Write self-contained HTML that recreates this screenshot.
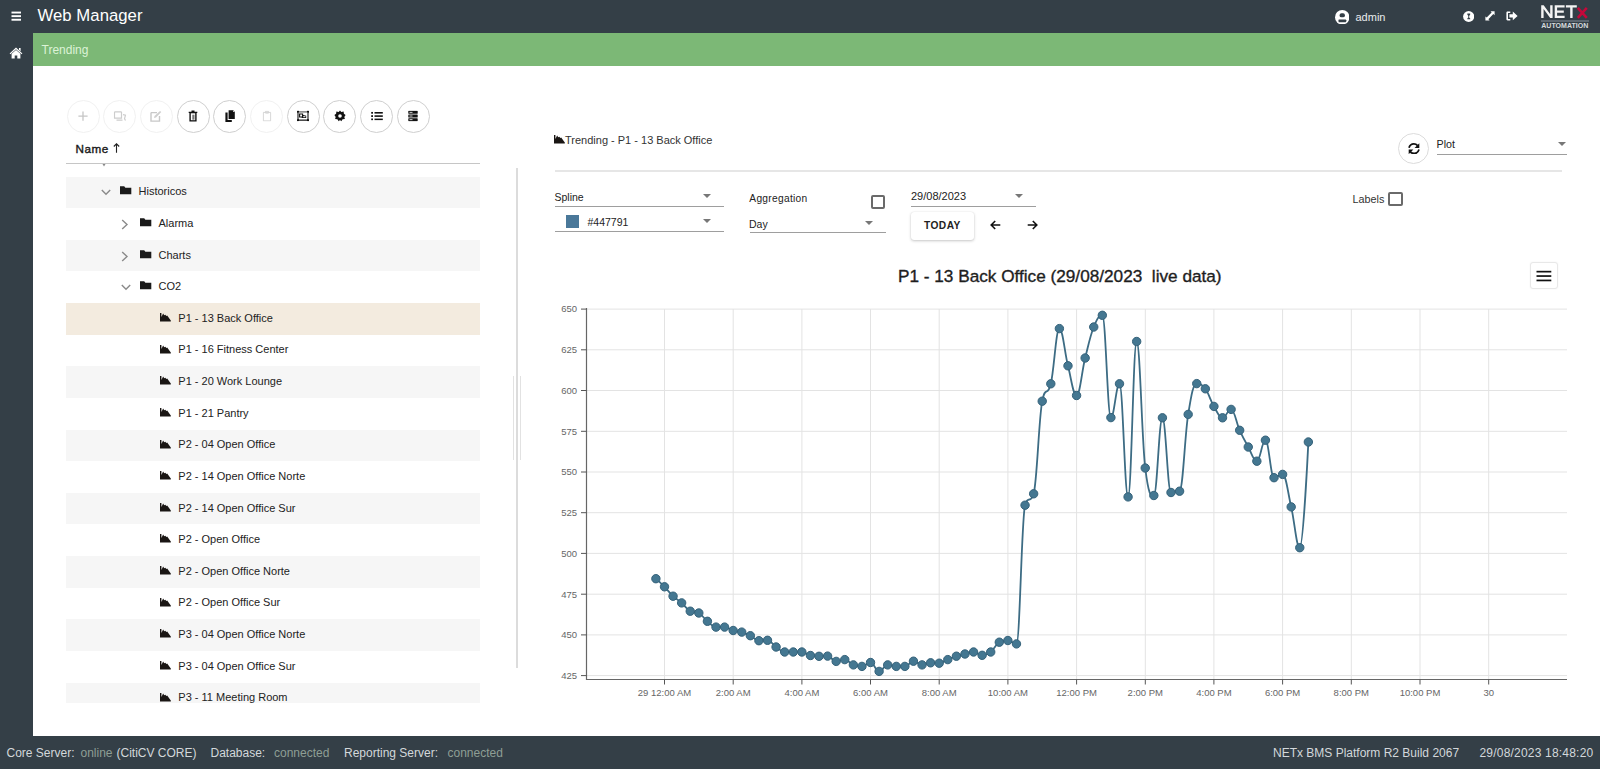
<!DOCTYPE html>
<html><head><meta charset="utf-8">
<style>
*{box-sizing:border-box;margin:0;padding:0}
html,body{width:1600px;height:769px;overflow:hidden;background:#343f47;font-family:"Liberation Sans",sans-serif;position:relative}
.abs{position:absolute;display:block;line-height:1}
.abs>svg{display:block}
#green{position:absolute;left:33px;top:33px;width:1567px;height:33.3px;background:#7cb876}
#green .t{position:absolute;left:8.5px;top:10px;font-size:12px;color:#dcf3d6}
#content{position:absolute;left:33px;top:66.3px;width:1567px;height:669.6px;background:#fff}
.chart{position:absolute;left:0;top:0;font-family:"Liberation Sans",sans-serif}
#footer{position:absolute;left:0;top:735.9px;width:1600px;height:34px}
#footer span{position:absolute;top:10.3px;font-size:12px;color:#d3d8db;white-space:pre}
#footer .g{color:#8e9e95}
.tb{position:absolute;top:100px;width:33px;height:33px;border-radius:50%;border:1.3px solid #cfcfcf;background:#fff}
.tb.dis{border-color:#f1f1f1}
.tb svg{position:absolute;left:50%;top:50%;transform:translate(-50%,calc(-50% - 0.9px))}
#tree{position:absolute;left:66px;top:164px;width:414px;height:538.5px;overflow:hidden}
.row{position:absolute;left:0;width:414px;height:31.625px}
.row.odd{background:#f6f6f6}
.row.sel{background:#f3ebdf}
.txt{font-size:11px;color:#222;white-space:pre}
.sel-line{position:absolute;background:#9e9e9e;height:1px}
.arrow{position:absolute;width:0;height:0;border-left:4.5px solid transparent;border-right:4.5px solid transparent;border-top:4px solid #777}
.lbl{position:absolute;font-size:10.5px;color:#222;white-space:pre;line-height:1}
.cb{position:absolute;border:2px solid #6a6a6a;border-radius:2px;background:#fff}
</style></head>
<body>
<!-- header -->
<svg class="abs" style="left:11px;top:11px" width="11" height="10" viewBox="0 0 11 10"><rect x="0.5" y="0.6" width="9.5" height="1.9" fill="#fff"/><rect x="0.5" y="4.2" width="9.5" height="1.9" fill="#fff"/><rect x="0.5" y="7.8" width="9.5" height="1.9" fill="#fff"/></svg>
<span class="abs" style="left:37.5px;top:8px;font-size:16.7px;color:#fff;letter-spacing:0.05px">Web Manager</span>
<!-- home -->
<svg class="abs" style="left:8.8px;top:47px" width="14" height="12" viewBox="0 0 14 12"><path d="M7 0.6 L13.4 6.4 L12.6 7.3 L7 2.3 L1.4 7.3 L0.6 6.4 Z" fill="#fff"/><path d="M10 1 H11.6 V4.2 L10 2.8Z" fill="#fff"/><path d="M2.6 6.8 L7 3 L11.4 6.8 V11.6 H8.3 V8.4 H5.7 V11.6 H2.6 Z" fill="#fff"/></svg>
<!-- user -->
<svg class="abs" style="left:1334.6px;top:9.8px" width="14.5" height="14.5" viewBox="0 0 14 14"><circle cx="7" cy="7" r="7" fill="#fff"/><rect x="4.4" y="3.2" width="5.2" height="3.9" rx="1.9" fill="#343f47"/><path d="M3.6 9.1 H10.3 L11.3 10.4 L10.3 11.8 H3.6 Q2.9 10.4 3.6 9.1Z" fill="#343f47"/></svg>
<span class="abs" style="left:1355.5px;top:12px;font-size:11px;color:#e8ecee">admin</span>
<!-- info -->
<svg class="abs" style="left:1462.8px;top:10.5px" width="11.4" height="11" viewBox="0 0 11.4 11"><ellipse cx="5.7" cy="5.5" rx="5.6" ry="5.4" fill="#fff"/><path d="M4.3 2.6 H7.2 V3.5 L6.2 5 V6.4 L7.2 7.4 V8.2 H4.3 V7.4 L5.3 6.4 V5 L4.3 3.5Z" fill="#343f47"/></svg>
<!-- expand -->
<svg class="abs" style="left:1484.6px;top:10.7px" width="10" height="11" viewBox="0 0 10 11"><path d="M5.6 0.3 H9.6 V4.3 L8.3 3.1 L3.4 8.2 L4.6 9.4 H0.4 V5.4 L1.7 6.6 L6.6 1.6Z" fill="#fff"/></svg>
<!-- signout -->
<svg class="abs" style="left:1505.6px;top:11px" width="12" height="10" viewBox="0 0 12 10"><path d="M4.3 0.4 H1.6 C0.9 0.4 0.4 0.9 0.4 1.6 V8.2 C0.4 8.9 0.9 9.4 1.6 9.4 H4.3 V7.9 H2 V1.9 H4.3Z" fill="#fff"/><path d="M6.8 0.6 L11.6 4.9 L6.8 9.2 V6.6 H3.4 V3.2 H6.8Z" fill="#fff"/></svg>
<!-- NETx logo -->
<svg class="abs" style="left:1535px;top:0px" width="60" height="33" viewBox="0 0 60 33"><path d="M6.2 18 V5.2 H8.7 L15.2 14.2 V5.2 H17.6 V18 H15.2 L8.6 9 V18Z" fill="#f4f4f4"/><path d="M19.7 5.2 H29.6 V7.5 H22.1 V10.5 H28.8 V12.8 H22.1 V15.7 H29.6 V18 H19.7Z" fill="#f4f4f4"/><path d="M30.9 5.2 H41.8 V7.5 H37.6 V18 H35.2 V7.5 H30.9Z" fill="#f4f4f4"/><path d="M42.8 7.8 L51.8 17.8 M51.8 7.8 L42.8 17.8" stroke="#c5083a" stroke-width="2.6"/><rect x="6" y="20.2" width="48" height="1.6" fill="#66707a"/><text x="6.3" y="28.4" font-size="6.4" font-weight="bold" fill="#d6dadd" font-family="Liberation Sans" textLength="47" lengthAdjust="spacingAndGlyphs">AUTOMATION</text></svg>

<div id="green"><span class="t">Trending</span></div>
<div id="content"></div>

<!-- toolbar -->
<div class="tb dis" style="left:66.5px"><svg width="10" height="10" viewBox="0 0 10 10"><path d="M4.35 0.4 H5.65 V4.35 H9.6 V5.65 H5.65 V9.6 H4.35 V5.65 H0.4 V4.35 H4.35Z" fill="#c6c6c6"/></svg></div>
<div class="tb dis" style="left:103.2px"><svg width="13" height="11" viewBox="0 0 13 11"><path d="M1 1.2 H8 M1 1.2 V7.5 H8 V1.2 M3 9.5 H9 M9.5 4 L12 4.5 L11 8 L12 10" fill="none" stroke="#cdcdcd" stroke-width="1.2"/></svg></div>
<div class="tb dis" style="left:139.9px"><svg width="12" height="12" viewBox="0 0 12 12"><path d="M1 2.5 H7 M1 2.5 V11 H9.5 V6" fill="none" stroke="#c8c8c8" stroke-width="1.4"/><path d="M4 8 L4.5 6 L10 0.8 L11.3 2 L6 7.4 Z" fill="#cfcfcf"/></svg></div>
<div class="tb" style="left:176.6px"><svg width="10" height="12" viewBox="0 0 10 12"><path d="M3.5 0.5 H6.5 V1.6 H9.3 V3 H8.6 V11.5 H1.4 V3 H0.7 V1.6 H3.5Z" fill="#111"/><rect x="2.8" y="3.2" width="4.4" height="6.9" fill="#fff"/><rect x="4.3" y="4.6" width="2.2" height="5" fill="#777"/></svg></div>
<div class="tb" style="left:213.3px"><svg width="10" height="12" viewBox="0 0 10 12"><path d="M3.6 0.2 H8.2 L9.8 1.8 V9 H3.6Z" fill="#111"/><path d="M0.4 2.4 H2.6 V10 H6.8 V11.8 H0.4Z" fill="#111"/><path d="M8 0.6 L9.4 2 H8Z" fill="#fff"/></svg></div>
<div class="tb dis" style="left:250px"><svg width="9" height="11" viewBox="0 0 9 11"><path d="M0.8 1.8 H8.2 V10.3 H0.8Z M3 0.7 H6 V2.5 H3Z" fill="none" stroke="#d4d4d4" stroke-width="1"/></svg></div>
<div class="tb" style="left:286.7px"><svg width="12" height="11" viewBox="0 0 12 11"><path d="M1 1 V10 M11 1 V10" stroke="#111" stroke-width="1.1"/><rect x="1" y="0.6" width="10" height="1.4" fill="#777"/><rect x="1" y="8.9" width="10" height="1.3" fill="#222"/><circle cx="1" cy="1" r="1.1" fill="#111"/><circle cx="11" cy="1" r="1.1" fill="#111"/><circle cx="1" cy="9.6" r="1.1" fill="#111"/><circle cx="11" cy="9.6" r="1.1" fill="#111"/><path d="M2.6 3.4 H5.6 V6.4 H2.6Z" fill="none" stroke="#111" stroke-width="1.1"/><path d="M5.4 4.2 L9.2 5.2 V7.4 H4.6Z" fill="#111"/><rect x="6.2" y="5.6" width="2.2" height="1" fill="#fff"/></svg></div>
<div class="tb" style="left:323.4px"><svg width="12" height="12" viewBox="0 0 12 12"><path d="M6 0.4 L7.3 1.9 L9.6 1.4 L9.9 3.6 L11.6 5 L10.3 6.8 L10.9 9 L8.6 9.2 L7.3 11.2 L6 10 L4.7 11.2 L3.4 9.2 L1.1 9 L1.7 6.8 L0.4 5 L2.1 3.6 L2.4 1.4 L4.7 1.9Z" fill="#111"/><circle cx="6" cy="5.9" r="1.8" fill="#fff"/></svg></div>
<div class="tb" style="left:360.1px"><svg width="12" height="9" viewBox="0 0 12 9"><rect x="0.2" y="0.3" width="1.8" height="1.8" fill="#111"/><rect x="0.2" y="3.6" width="1.8" height="1.8" fill="#111"/><rect x="0.2" y="6.9" width="1.8" height="1.8" fill="#111"/><rect x="3.5" y="0.4" width="8.3" height="1.6" fill="#111"/><rect x="3.5" y="3.7" width="8.3" height="1.6" fill="#111"/><rect x="3.5" y="7" width="8.3" height="1.6" fill="#111"/></svg></div>
<div class="tb" style="left:396.8px"><svg width="10" height="11" viewBox="0 0 10 11"><rect x="0.3" y="0.2" width="9.4" height="3" rx="0.6" fill="#111"/><rect x="0.3" y="3.9" width="9.4" height="3" rx="0.6" fill="#111"/><rect x="0.3" y="7.6" width="9.4" height="3" rx="0.6" fill="#111"/><rect x="1.5" y="1.3" width="3" height="0.8" fill="#fff"/><rect x="1.5" y="5" width="3" height="0.8" fill="#fff"/><rect x="1.5" y="8.7" width="3" height="0.8" fill="#fff"/></svg></div>

<!-- Name header -->
<span class="abs" style="left:75.5px;top:143px;font-size:11.7px;letter-spacing:0.55px;color:#1a1a1a;-webkit-text-stroke:0.4px #1a1a1a">Name</span>
<svg class="abs" style="left:112.5px;top:143px" width="7" height="10" viewBox="0 0 7 10"><path d="M3.5 0.8 V9.8 M0.8 3.5 L3.5 0.8 L6.2 3.5" fill="none" stroke="#222" stroke-width="1.1"/></svg>
<div class="abs" style="left:66px;top:162.8px;width:414px;height:1.3px;background:#c6c6c6"></div>
<svg class="abs" style="left:101.5px;top:163.8px" width="4" height="3" viewBox="0 0 4 3"><path d="M0.5 0 L2 2.4 L3.5 0Z" fill="#888"/></svg>

<div id="tree">
<div class="row odd" style="top:12.500px"><span class="abs" style="left:34.8px;top:12.8px"><svg class="chev" width="10" height="7" viewBox="0 0 10 7"><path d="M0.8 1 L5 5.3 L9.2 1" fill="none" stroke="#8a8a8a" stroke-width="1.4"/></svg></span><span class="abs" style="left:54.0px;top:9.8px"><svg class="ic" width="12" height="9" viewBox="0 0 12 9"><path d="M0 0.3 H4.2 L5.4 1.8 H11.3 V8.2 H0 Z" fill="#1a1a1a"/></svg></span><span class="abs txt" style="left:72.5px;top:9.8px">Historicos</span></div>
<div class="row" style="top:44.125px"><span class="abs" style="left:55.0px;top:11px"><svg class="chev" width="8" height="11" viewBox="0 0 8 11"><path d="M1.2 1 L6 5.5 L1.2 10" fill="none" stroke="#8a8a8a" stroke-width="1.4"/></svg></span><span class="abs" style="left:74.0px;top:9.8px"><svg class="ic" width="12" height="9" viewBox="0 0 12 9"><path d="M0 0.3 H4.2 L5.4 1.8 H11.3 V8.2 H0 Z" fill="#1a1a1a"/></svg></span><span class="abs txt" style="left:92.5px;top:9.8px">Alarma</span></div>
<div class="row odd" style="top:75.750px"><span class="abs" style="left:55.0px;top:11px"><svg class="chev" width="8" height="11" viewBox="0 0 8 11"><path d="M1.2 1 L6 5.5 L1.2 10" fill="none" stroke="#8a8a8a" stroke-width="1.4"/></svg></span><span class="abs" style="left:74.0px;top:9.8px"><svg class="ic" width="12" height="9" viewBox="0 0 12 9"><path d="M0 0.3 H4.2 L5.4 1.8 H11.3 V8.2 H0 Z" fill="#1a1a1a"/></svg></span><span class="abs txt" style="left:92.5px;top:9.8px">Charts</span></div>
<div class="row" style="top:107.375px"><span class="abs" style="left:54.8px;top:12.8px"><svg class="chev" width="10" height="7" viewBox="0 0 10 7"><path d="M0.8 1 L5 5.3 L9.2 1" fill="none" stroke="#8a8a8a" stroke-width="1.4"/></svg></span><span class="abs" style="left:74.0px;top:9.8px"><svg class="ic" width="12" height="9" viewBox="0 0 12 9"><path d="M0 0.3 H4.2 L5.4 1.8 H11.3 V8.2 H0 Z" fill="#1a1a1a"/></svg></span><span class="abs txt" style="left:92.5px;top:9.8px">CO2</span></div>
<div class="row sel" style="top:139.000px"><span class="abs" style="left:94.0px;top:10.1px"><svg class="ic" width="12" height="9" viewBox="0 0 12 9"><path d="M0 0 H1.4 V7.3 H10.8 V8.6 H0Z M1.4 7.4 V4 L3.1 0.6 L4.3 2.3 L5.4 1.7 L6.3 2.9 L7.2 2.4 L10.8 7.4Z" fill="#1a1614"/></svg></span><span class="abs txt" style="left:112.3px;top:9.8px">P1 - 13 Back Office</span></div>
<div class="row" style="top:170.625px"><span class="abs" style="left:94.0px;top:10.1px"><svg class="ic" width="12" height="9" viewBox="0 0 12 9"><path d="M0 0 H1.4 V7.3 H10.8 V8.6 H0Z M1.4 7.4 V4 L3.1 0.6 L4.3 2.3 L5.4 1.7 L6.3 2.9 L7.2 2.4 L10.8 7.4Z" fill="#1a1614"/></svg></span><span class="abs txt" style="left:112.3px;top:9.8px">P1 - 16 Fitness Center</span></div>
<div class="row odd" style="top:202.250px"><span class="abs" style="left:94.0px;top:10.1px"><svg class="ic" width="12" height="9" viewBox="0 0 12 9"><path d="M0 0 H1.4 V7.3 H10.8 V8.6 H0Z M1.4 7.4 V4 L3.1 0.6 L4.3 2.3 L5.4 1.7 L6.3 2.9 L7.2 2.4 L10.8 7.4Z" fill="#1a1614"/></svg></span><span class="abs txt" style="left:112.3px;top:9.8px">P1 - 20 Work Lounge</span></div>
<div class="row" style="top:233.875px"><span class="abs" style="left:94.0px;top:10.1px"><svg class="ic" width="12" height="9" viewBox="0 0 12 9"><path d="M0 0 H1.4 V7.3 H10.8 V8.6 H0Z M1.4 7.4 V4 L3.1 0.6 L4.3 2.3 L5.4 1.7 L6.3 2.9 L7.2 2.4 L10.8 7.4Z" fill="#1a1614"/></svg></span><span class="abs txt" style="left:112.3px;top:9.8px">P1 - 21 Pantry</span></div>
<div class="row odd" style="top:265.500px"><span class="abs" style="left:94.0px;top:10.1px"><svg class="ic" width="12" height="9" viewBox="0 0 12 9"><path d="M0 0 H1.4 V7.3 H10.8 V8.6 H0Z M1.4 7.4 V4 L3.1 0.6 L4.3 2.3 L5.4 1.7 L6.3 2.9 L7.2 2.4 L10.8 7.4Z" fill="#1a1614"/></svg></span><span class="abs txt" style="left:112.3px;top:9.8px">P2 - 04 Open Office</span></div>
<div class="row" style="top:297.125px"><span class="abs" style="left:94.0px;top:10.1px"><svg class="ic" width="12" height="9" viewBox="0 0 12 9"><path d="M0 0 H1.4 V7.3 H10.8 V8.6 H0Z M1.4 7.4 V4 L3.1 0.6 L4.3 2.3 L5.4 1.7 L6.3 2.9 L7.2 2.4 L10.8 7.4Z" fill="#1a1614"/></svg></span><span class="abs txt" style="left:112.3px;top:9.8px">P2 - 14 Open Office Norte</span></div>
<div class="row odd" style="top:328.750px"><span class="abs" style="left:94.0px;top:10.1px"><svg class="ic" width="12" height="9" viewBox="0 0 12 9"><path d="M0 0 H1.4 V7.3 H10.8 V8.6 H0Z M1.4 7.4 V4 L3.1 0.6 L4.3 2.3 L5.4 1.7 L6.3 2.9 L7.2 2.4 L10.8 7.4Z" fill="#1a1614"/></svg></span><span class="abs txt" style="left:112.3px;top:9.8px">P2 - 14 Open Office Sur</span></div>
<div class="row" style="top:360.375px"><span class="abs" style="left:94.0px;top:10.1px"><svg class="ic" width="12" height="9" viewBox="0 0 12 9"><path d="M0 0 H1.4 V7.3 H10.8 V8.6 H0Z M1.4 7.4 V4 L3.1 0.6 L4.3 2.3 L5.4 1.7 L6.3 2.9 L7.2 2.4 L10.8 7.4Z" fill="#1a1614"/></svg></span><span class="abs txt" style="left:112.3px;top:9.8px">P2 - Open Office</span></div>
<div class="row odd" style="top:392.000px"><span class="abs" style="left:94.0px;top:10.1px"><svg class="ic" width="12" height="9" viewBox="0 0 12 9"><path d="M0 0 H1.4 V7.3 H10.8 V8.6 H0Z M1.4 7.4 V4 L3.1 0.6 L4.3 2.3 L5.4 1.7 L6.3 2.9 L7.2 2.4 L10.8 7.4Z" fill="#1a1614"/></svg></span><span class="abs txt" style="left:112.3px;top:9.8px">P2 - Open Office Norte</span></div>
<div class="row" style="top:423.625px"><span class="abs" style="left:94.0px;top:10.1px"><svg class="ic" width="12" height="9" viewBox="0 0 12 9"><path d="M0 0 H1.4 V7.3 H10.8 V8.6 H0Z M1.4 7.4 V4 L3.1 0.6 L4.3 2.3 L5.4 1.7 L6.3 2.9 L7.2 2.4 L10.8 7.4Z" fill="#1a1614"/></svg></span><span class="abs txt" style="left:112.3px;top:9.8px">P2 - Open Office Sur</span></div>
<div class="row odd" style="top:455.250px"><span class="abs" style="left:94.0px;top:10.1px"><svg class="ic" width="12" height="9" viewBox="0 0 12 9"><path d="M0 0 H1.4 V7.3 H10.8 V8.6 H0Z M1.4 7.4 V4 L3.1 0.6 L4.3 2.3 L5.4 1.7 L6.3 2.9 L7.2 2.4 L10.8 7.4Z" fill="#1a1614"/></svg></span><span class="abs txt" style="left:112.3px;top:9.8px">P3 - 04 Open Office Norte</span></div>
<div class="row" style="top:486.875px"><span class="abs" style="left:94.0px;top:10.1px"><svg class="ic" width="12" height="9" viewBox="0 0 12 9"><path d="M0 0 H1.4 V7.3 H10.8 V8.6 H0Z M1.4 7.4 V4 L3.1 0.6 L4.3 2.3 L5.4 1.7 L6.3 2.9 L7.2 2.4 L10.8 7.4Z" fill="#1a1614"/></svg></span><span class="abs txt" style="left:112.3px;top:9.8px">P3 - 04 Open Office Sur</span></div>
<div class="row odd" style="top:518.500px"><span class="abs" style="left:94.0px;top:10.1px"><svg class="ic" width="12" height="9" viewBox="0 0 12 9"><path d="M0 0 H1.4 V7.3 H10.8 V8.6 H0Z M1.4 7.4 V4 L3.1 0.6 L4.3 2.3 L5.4 1.7 L6.3 2.9 L7.2 2.4 L10.8 7.4Z" fill="#1a1614"/></svg></span><span class="abs txt" style="left:112.3px;top:9.8px">P3 - 11 Meeting Room</span></div>
</div>

<!-- splitter -->
<div class="abs" style="left:516px;top:167.5px;width:2px;height:500px;background:#dcdcdc"></div>
<div class="abs" style="left:513px;top:376px;width:1px;height:84px;background:#e2e2e2"></div>
<div class="abs" style="left:520px;top:376px;width:1px;height:84px;background:#e2e2e2"></div>

<!-- right header -->
<svg class="abs" style="left:553.8px;top:134.6px" width="12" height="9" viewBox="0 0 12 9"><path d="M0 0 H1.4 V7.3 H10.8 V8.6 H0Z M1.4 7.4 V4 L3.1 0.6 L4.3 2.3 L5.4 1.7 L6.3 2.9 L7.2 2.4 L10.8 7.4Z" fill="#1a1614"/></svg>
<span class="abs" style="left:565px;top:134.5px;font-size:11px;color:#333;white-space:pre">Trending - P1 - 13 Back Office</span>
<div class="abs" style="left:555px;top:170px;width:1007px;height:1.8px;background:#e6e6e6"></div>

<div class="tb" style="left:1398px;top:132.5px;width:31px;height:31px;border-color:#dcdcdc"><svg style="left:8.6px;top:9px;transform:none" width="12" height="11.5" viewBox="0 0 12 11.5"><path d="M1 4.8 C1.8 2.2 3.6 0.9 5.8 0.9 C7.3 0.9 8.6 1.5 9.6 2.6" fill="none" stroke="#111" stroke-width="1.8"/><path d="M11.3 0.2 V4.9 H6.6Z" fill="#111"/><path d="M11 6.6 C10.2 9.2 8.4 10.5 6.2 10.5 C4.7 10.5 3.4 9.9 2.4 8.8" fill="none" stroke="#111" stroke-width="1.8"/><path d="M0.7 11.2 V6.5 H5.4Z" fill="#111"/></svg></div>
<span class="lbl" style="left:1436.5px;top:139px;font-size:10.7px">Plot</span>
<div class="arrow" style="left:1558px;top:142.3px"></div>
<div class="sel-line" style="left:1436.5px;top:154px;width:130.5px"></div>

<!-- controls -->
<span class="lbl" style="left:554.5px;top:191.5px">Spline</span>
<div class="arrow" style="left:703px;top:194.3px"></div>
<div class="sel-line" style="left:554.5px;top:206px;width:169.5px"></div>
<div class="abs" style="left:565.5px;top:215px;width:13.3px;height:12.5px;background:#4a7899"></div>
<span class="lbl" style="left:587.5px;top:216.5px">#447791</span>
<div class="arrow" style="left:703px;top:219.2px"></div>
<div class="sel-line" style="left:554.5px;top:230.8px;width:169.5px"></div>

<span class="lbl" style="left:749.3px;top:193.6px;font-size:10.2px;letter-spacing:0.3px">Aggregation</span>
<div class="cb" style="left:871.2px;top:194.5px;width:14.3px;height:14px"></div>
<span class="lbl" style="left:749px;top:218.5px">Day</span>
<div class="arrow" style="left:865px;top:221px"></div>
<div class="sel-line" style="left:749.5px;top:232.3px;width:136px"></div>

<span class="lbl" style="left:911px;top:191px;font-size:11px">29/08/2023</span>
<div class="arrow" style="left:1015px;top:194px"></div>
<div class="sel-line" style="left:911px;top:206px;width:124.5px"></div>
<div class="abs" style="left:910.5px;top:212px;width:63.5px;height:28px;background:#fff;border-radius:3px;box-shadow:0 1px 3px rgba(0,0,0,0.22),0 0 1px rgba(0,0,0,0.12)"></div>
<span class="lbl" style="left:924px;top:220.8px;font-size:10.2px;font-weight:bold;letter-spacing:0.45px;color:#222">TODAY</span>
<svg class="abs" style="left:990px;top:219.5px" width="11" height="10" viewBox="0 0 11 10"><path d="M10.3 5 H1.8 M5.2 1 L1.2 5 L5.2 9" fill="none" stroke="#111" stroke-width="1.6"/></svg>
<svg class="abs" style="left:1026.5px;top:219.5px" width="11" height="10" viewBox="0 0 11 10"><path d="M0.7 5 H9.2 M5.8 1 L9.8 5 L5.8 9" fill="none" stroke="#111" stroke-width="1.6"/></svg>

<span class="lbl" style="left:1352.5px;top:193.8px;font-size:10.8px;color:#333">Labels</span>
<div class="cb" style="left:1388.3px;top:191.8px;width:14.7px;height:14.6px"></div>

<!-- chart title -->
<span class="abs" style="left:898px;top:267.5px;font-size:17.2px;color:#1e1e1e;white-space:pre;-webkit-text-stroke:0.35px #1e1e1e">P1 - 13 Back Office (29/08/2023  live data)</span>
<div class="abs" style="left:1530px;top:261.5px;width:27.5px;height:27.5px;border:1px solid #e8e8e8;border-radius:3px;background:#fff;box-shadow:0 0 2px rgba(0,0,0,0.06)"></div>
<svg class="abs" style="left:1536px;top:269.5px" width="16" height="12" viewBox="0 0 16 12"><rect x="0.5" y="0.8" width="14.8" height="1.7" fill="#111"/><rect x="0.5" y="5.2" width="14.8" height="1.7" fill="#111"/><rect x="0.5" y="9.6" width="14.8" height="1.7" fill="#111"/></svg>

<svg class="chart" width="1600" height="769" viewBox="0 0 1600 769">
<line x1="586.5" x2="1567" y1="309.1" y2="309.1" stroke="#e3e3e3" stroke-width="1"/>
<line x1="586.5" x2="1567" y1="349.8" y2="349.8" stroke="#e3e3e3" stroke-width="1"/>
<line x1="586.5" x2="1567" y1="390.5" y2="390.5" stroke="#e3e3e3" stroke-width="1"/>
<line x1="586.5" x2="1567" y1="431.3" y2="431.3" stroke="#e3e3e3" stroke-width="1"/>
<line x1="586.5" x2="1567" y1="472.0" y2="472.0" stroke="#e3e3e3" stroke-width="1"/>
<line x1="586.5" x2="1567" y1="512.7" y2="512.7" stroke="#e3e3e3" stroke-width="1"/>
<line x1="586.5" x2="1567" y1="553.4" y2="553.4" stroke="#e3e3e3" stroke-width="1"/>
<line x1="586.5" x2="1567" y1="594.2" y2="594.2" stroke="#e3e3e3" stroke-width="1"/>
<line x1="586.5" x2="1567" y1="634.9" y2="634.9" stroke="#e3e3e3" stroke-width="1"/>
<line x1="586.5" x2="1567" y1="675.6" y2="675.6" stroke="#e3e3e3" stroke-width="1"/>
<line x1="664.5" x2="664.5" y1="309" y2="679.5" stroke="#e3e3e3" stroke-width="1"/>
<line x1="733.2" x2="733.2" y1="309" y2="679.5" stroke="#e3e3e3" stroke-width="1"/>
<line x1="801.9" x2="801.9" y1="309" y2="679.5" stroke="#e3e3e3" stroke-width="1"/>
<line x1="870.5" x2="870.5" y1="309" y2="679.5" stroke="#e3e3e3" stroke-width="1"/>
<line x1="939.2" x2="939.2" y1="309" y2="679.5" stroke="#e3e3e3" stroke-width="1"/>
<line x1="1007.9" x2="1007.9" y1="309" y2="679.5" stroke="#e3e3e3" stroke-width="1"/>
<line x1="1076.6" x2="1076.6" y1="309" y2="679.5" stroke="#e3e3e3" stroke-width="1"/>
<line x1="1145.3" x2="1145.3" y1="309" y2="679.5" stroke="#e3e3e3" stroke-width="1"/>
<line x1="1213.9" x2="1213.9" y1="309" y2="679.5" stroke="#e3e3e3" stroke-width="1"/>
<line x1="1282.6" x2="1282.6" y1="309" y2="679.5" stroke="#e3e3e3" stroke-width="1"/>
<line x1="1351.3" x2="1351.3" y1="309" y2="679.5" stroke="#e3e3e3" stroke-width="1"/>
<line x1="1420.0" x2="1420.0" y1="309" y2="679.5" stroke="#e3e3e3" stroke-width="1"/>
<line x1="1488.7" x2="1488.7" y1="309" y2="679.5" stroke="#e3e3e3" stroke-width="1"/>
<line x1="586.5" x2="586.5" y1="308" y2="680" stroke="#666" stroke-width="1.2"/>
<line x1="586" x2="1567" y1="679.5" y2="679.5" stroke="#666" stroke-width="1.2"/>
<line x1="581" x2="586.5" y1="309.1" y2="309.1" stroke="#555" stroke-width="1"/>
<text x="577" y="312.4" text-anchor="end" font-size="9.5" fill="#666">650</text>
<line x1="581" x2="586.5" y1="349.8" y2="349.8" stroke="#555" stroke-width="1"/>
<text x="577" y="353.1" text-anchor="end" font-size="9.5" fill="#666">625</text>
<line x1="581" x2="586.5" y1="390.5" y2="390.5" stroke="#555" stroke-width="1"/>
<text x="577" y="393.8" text-anchor="end" font-size="9.5" fill="#666">600</text>
<line x1="581" x2="586.5" y1="431.3" y2="431.3" stroke="#555" stroke-width="1"/>
<text x="577" y="434.6" text-anchor="end" font-size="9.5" fill="#666">575</text>
<line x1="581" x2="586.5" y1="472.0" y2="472.0" stroke="#555" stroke-width="1"/>
<text x="577" y="475.3" text-anchor="end" font-size="9.5" fill="#666">550</text>
<line x1="581" x2="586.5" y1="512.7" y2="512.7" stroke="#555" stroke-width="1"/>
<text x="577" y="516.0" text-anchor="end" font-size="9.5" fill="#666">525</text>
<line x1="581" x2="586.5" y1="553.4" y2="553.4" stroke="#555" stroke-width="1"/>
<text x="577" y="556.7" text-anchor="end" font-size="9.5" fill="#666">500</text>
<line x1="581" x2="586.5" y1="594.2" y2="594.2" stroke="#555" stroke-width="1"/>
<text x="577" y="597.5" text-anchor="end" font-size="9.5" fill="#666">475</text>
<line x1="581" x2="586.5" y1="634.9" y2="634.9" stroke="#555" stroke-width="1"/>
<text x="577" y="638.2" text-anchor="end" font-size="9.5" fill="#666">450</text>
<line x1="581" x2="586.5" y1="675.6" y2="675.6" stroke="#555" stroke-width="1"/>
<text x="577" y="678.9" text-anchor="end" font-size="9.5" fill="#666">425</text>
<line x1="664.5" x2="664.5" y1="679.5" y2="684.5" stroke="#555" stroke-width="1"/>
<text x="664.5" y="696.1" text-anchor="middle" font-size="9.5" fill="#666">29 12:00 AM</text>
<line x1="733.2" x2="733.2" y1="679.5" y2="684.5" stroke="#555" stroke-width="1"/>
<text x="733.2" y="696.1" text-anchor="middle" font-size="9.5" fill="#666">2:00 AM</text>
<line x1="801.9" x2="801.9" y1="679.5" y2="684.5" stroke="#555" stroke-width="1"/>
<text x="801.9" y="696.1" text-anchor="middle" font-size="9.5" fill="#666">4:00 AM</text>
<line x1="870.5" x2="870.5" y1="679.5" y2="684.5" stroke="#555" stroke-width="1"/>
<text x="870.5" y="696.1" text-anchor="middle" font-size="9.5" fill="#666">6:00 AM</text>
<line x1="939.2" x2="939.2" y1="679.5" y2="684.5" stroke="#555" stroke-width="1"/>
<text x="939.2" y="696.1" text-anchor="middle" font-size="9.5" fill="#666">8:00 AM</text>
<line x1="1007.9" x2="1007.9" y1="679.5" y2="684.5" stroke="#555" stroke-width="1"/>
<text x="1007.9" y="696.1" text-anchor="middle" font-size="9.5" fill="#666">10:00 AM</text>
<line x1="1076.6" x2="1076.6" y1="679.5" y2="684.5" stroke="#555" stroke-width="1"/>
<text x="1076.6" y="696.1" text-anchor="middle" font-size="9.5" fill="#666">12:00 PM</text>
<line x1="1145.3" x2="1145.3" y1="679.5" y2="684.5" stroke="#555" stroke-width="1"/>
<text x="1145.3" y="696.1" text-anchor="middle" font-size="9.5" fill="#666">2:00 PM</text>
<line x1="1213.9" x2="1213.9" y1="679.5" y2="684.5" stroke="#555" stroke-width="1"/>
<text x="1213.9" y="696.1" text-anchor="middle" font-size="9.5" fill="#666">4:00 PM</text>
<line x1="1282.6" x2="1282.6" y1="679.5" y2="684.5" stroke="#555" stroke-width="1"/>
<text x="1282.6" y="696.1" text-anchor="middle" font-size="9.5" fill="#666">6:00 PM</text>
<line x1="1351.3" x2="1351.3" y1="679.5" y2="684.5" stroke="#555" stroke-width="1"/>
<text x="1351.3" y="696.1" text-anchor="middle" font-size="9.5" fill="#666">8:00 PM</text>
<line x1="1420.0" x2="1420.0" y1="679.5" y2="684.5" stroke="#555" stroke-width="1"/>
<text x="1420.0" y="696.1" text-anchor="middle" font-size="9.5" fill="#666">10:00 PM</text>
<line x1="1488.7" x2="1488.7" y1="679.5" y2="684.5" stroke="#555" stroke-width="1"/>
<text x="1488.7" y="696.1" text-anchor="middle" font-size="9.5" fill="#666">30</text>
<path d="M 655.90 578.70 C 655.90 578.70 661.05 583.30 664.49 586.80 C 667.92 590.30 669.64 592.98 673.07 596.20 C 676.50 599.42 678.22 599.90 681.65 602.90 C 685.09 605.90 686.81 609.40 690.24 611.20 C 693.67 613.00 695.39 611.20 698.82 613.00 C 702.26 614.80 703.98 618.48 707.41 621.30 C 710.84 624.12 712.56 627.10 716.00 627.10 C 719.43 627.10 721.15 627.10 724.58 627.10 C 728.01 627.10 729.73 629.50 733.16 630.50 C 736.60 631.50 738.32 631.06 741.75 632.10 C 745.18 633.14 746.90 633.98 750.34 635.70 C 753.77 637.42 755.49 640.70 758.92 640.70 C 762.35 640.70 764.07 640.30 767.50 640.30 C 770.94 640.30 772.66 644.66 776.09 647.00 C 779.52 649.34 781.24 652.00 784.67 652.00 C 788.11 652.00 789.83 652.00 793.26 652.00 C 796.69 652.00 798.41 652.00 801.85 652.00 C 805.28 652.00 807.00 654.70 810.43 655.50 C 813.86 656.30 815.58 656.30 819.01 656.30 C 822.45 656.30 824.17 656.10 827.60 656.10 C 831.03 656.10 832.75 661.40 836.18 661.40 C 839.62 661.40 841.34 659.60 844.77 659.60 C 848.20 659.60 849.92 663.54 853.36 664.90 C 856.79 666.26 858.51 666.40 861.94 666.40 C 865.37 666.40 867.09 662.50 870.52 662.50 C 873.96 662.50 875.68 671.40 879.11 671.40 C 882.54 671.40 884.26 664.90 887.69 664.90 C 891.13 664.90 892.85 666.40 896.28 666.40 C 899.71 666.40 901.43 666.40 904.87 666.40 C 908.30 666.40 910.02 661.20 913.45 661.20 C 916.88 661.20 918.60 664.90 922.04 664.90 C 925.47 664.90 927.19 662.80 930.62 662.80 C 934.05 662.80 935.77 663.20 939.20 663.20 C 942.64 663.20 944.36 661.00 947.79 659.60 C 951.22 658.20 952.94 657.32 956.38 656.20 C 959.81 655.08 961.53 654.84 964.96 654.00 C 968.39 653.16 970.11 652.00 973.55 652.00 C 976.98 652.00 978.70 655.30 982.13 655.30 C 985.56 655.30 987.28 654.62 990.72 652.00 C 994.15 649.38 995.87 643.90 999.30 642.20 C 1002.73 640.50 1004.45 640.50 1007.88 640.50 C 1011.32 640.50 1013.04 643.90 1016.47 643.90 C 1019.90 643.90 1021.62 516.60 1025.06 505.20 C 1028.49 493.80 1030.21 505.20 1033.64 493.80 C 1037.07 482.40 1038.79 418.60 1042.22 401.20 C 1045.66 383.80 1047.38 398.32 1050.81 383.80 C 1054.24 369.28 1055.96 328.60 1059.39 328.60 C 1062.83 328.60 1064.55 352.42 1067.98 365.80 C 1071.41 379.18 1073.13 395.50 1076.57 395.50 C 1080.00 395.50 1081.72 371.70 1085.15 358.00 C 1088.58 344.30 1090.30 335.54 1093.74 327.00 C 1097.17 318.46 1098.89 315.30 1102.32 315.30 C 1105.75 315.30 1107.47 417.60 1110.90 417.60 C 1114.34 417.60 1116.06 383.80 1119.49 383.80 C 1122.92 383.80 1124.64 496.90 1128.08 496.90 C 1131.51 496.90 1133.23 341.50 1136.66 341.50 C 1140.09 341.50 1141.81 440.50 1145.24 468.00 C 1148.68 495.50 1150.40 495.50 1153.83 495.50 C 1157.26 495.50 1158.98 417.80 1162.41 417.80 C 1165.85 417.80 1167.57 492.50 1171.00 492.50 C 1174.43 492.50 1176.15 492.50 1179.59 491.20 C 1183.02 489.90 1184.74 435.92 1188.17 414.40 C 1191.60 392.88 1193.32 383.60 1196.76 383.60 C 1200.19 383.60 1201.91 384.24 1205.34 388.80 C 1208.77 393.36 1210.49 400.60 1213.93 406.40 C 1217.36 412.20 1219.08 417.80 1222.51 417.80 C 1225.94 417.80 1227.66 409.40 1231.10 409.40 C 1234.53 409.40 1236.25 422.78 1239.68 430.30 C 1243.11 437.82 1244.83 440.82 1248.26 447.00 C 1251.70 453.18 1253.42 461.20 1256.85 461.20 C 1260.28 461.20 1262.00 440.20 1265.43 440.20 C 1268.87 440.20 1270.59 477.70 1274.02 477.70 C 1277.45 477.70 1279.17 474.40 1282.61 474.40 C 1286.04 474.40 1287.76 492.24 1291.19 506.90 C 1294.62 521.56 1296.34 547.70 1299.78 547.70 C 1303.21 547.70 1308.36 442.00 1308.36 442.00" fill="none" stroke="#3d6c84" stroke-width="1.8"/>
<circle cx="655.90" cy="578.70" r="4.2" fill="#447791" stroke="#35627a" stroke-width="1"/>
<circle cx="664.49" cy="586.80" r="4.2" fill="#447791" stroke="#35627a" stroke-width="1"/>
<circle cx="673.07" cy="596.20" r="4.2" fill="#447791" stroke="#35627a" stroke-width="1"/>
<circle cx="681.65" cy="602.90" r="4.2" fill="#447791" stroke="#35627a" stroke-width="1"/>
<circle cx="690.24" cy="611.20" r="4.2" fill="#447791" stroke="#35627a" stroke-width="1"/>
<circle cx="698.82" cy="613.00" r="4.2" fill="#447791" stroke="#35627a" stroke-width="1"/>
<circle cx="707.41" cy="621.30" r="4.2" fill="#447791" stroke="#35627a" stroke-width="1"/>
<circle cx="716.00" cy="627.10" r="4.2" fill="#447791" stroke="#35627a" stroke-width="1"/>
<circle cx="724.58" cy="627.10" r="4.2" fill="#447791" stroke="#35627a" stroke-width="1"/>
<circle cx="733.16" cy="630.50" r="4.2" fill="#447791" stroke="#35627a" stroke-width="1"/>
<circle cx="741.75" cy="632.10" r="4.2" fill="#447791" stroke="#35627a" stroke-width="1"/>
<circle cx="750.34" cy="635.70" r="4.2" fill="#447791" stroke="#35627a" stroke-width="1"/>
<circle cx="758.92" cy="640.70" r="4.2" fill="#447791" stroke="#35627a" stroke-width="1"/>
<circle cx="767.50" cy="640.30" r="4.2" fill="#447791" stroke="#35627a" stroke-width="1"/>
<circle cx="776.09" cy="647.00" r="4.2" fill="#447791" stroke="#35627a" stroke-width="1"/>
<circle cx="784.67" cy="652.00" r="4.2" fill="#447791" stroke="#35627a" stroke-width="1"/>
<circle cx="793.26" cy="652.00" r="4.2" fill="#447791" stroke="#35627a" stroke-width="1"/>
<circle cx="801.85" cy="652.00" r="4.2" fill="#447791" stroke="#35627a" stroke-width="1"/>
<circle cx="810.43" cy="655.50" r="4.2" fill="#447791" stroke="#35627a" stroke-width="1"/>
<circle cx="819.01" cy="656.30" r="4.2" fill="#447791" stroke="#35627a" stroke-width="1"/>
<circle cx="827.60" cy="656.10" r="4.2" fill="#447791" stroke="#35627a" stroke-width="1"/>
<circle cx="836.18" cy="661.40" r="4.2" fill="#447791" stroke="#35627a" stroke-width="1"/>
<circle cx="844.77" cy="659.60" r="4.2" fill="#447791" stroke="#35627a" stroke-width="1"/>
<circle cx="853.36" cy="664.90" r="4.2" fill="#447791" stroke="#35627a" stroke-width="1"/>
<circle cx="861.94" cy="666.40" r="4.2" fill="#447791" stroke="#35627a" stroke-width="1"/>
<circle cx="870.52" cy="662.50" r="4.2" fill="#447791" stroke="#35627a" stroke-width="1"/>
<circle cx="879.11" cy="671.40" r="4.2" fill="#447791" stroke="#35627a" stroke-width="1"/>
<circle cx="887.69" cy="664.90" r="4.2" fill="#447791" stroke="#35627a" stroke-width="1"/>
<circle cx="896.28" cy="666.40" r="4.2" fill="#447791" stroke="#35627a" stroke-width="1"/>
<circle cx="904.87" cy="666.40" r="4.2" fill="#447791" stroke="#35627a" stroke-width="1"/>
<circle cx="913.45" cy="661.20" r="4.2" fill="#447791" stroke="#35627a" stroke-width="1"/>
<circle cx="922.04" cy="664.90" r="4.2" fill="#447791" stroke="#35627a" stroke-width="1"/>
<circle cx="930.62" cy="662.80" r="4.2" fill="#447791" stroke="#35627a" stroke-width="1"/>
<circle cx="939.20" cy="663.20" r="4.2" fill="#447791" stroke="#35627a" stroke-width="1"/>
<circle cx="947.79" cy="659.60" r="4.2" fill="#447791" stroke="#35627a" stroke-width="1"/>
<circle cx="956.38" cy="656.20" r="4.2" fill="#447791" stroke="#35627a" stroke-width="1"/>
<circle cx="964.96" cy="654.00" r="4.2" fill="#447791" stroke="#35627a" stroke-width="1"/>
<circle cx="973.55" cy="652.00" r="4.2" fill="#447791" stroke="#35627a" stroke-width="1"/>
<circle cx="982.13" cy="655.30" r="4.2" fill="#447791" stroke="#35627a" stroke-width="1"/>
<circle cx="990.72" cy="652.00" r="4.2" fill="#447791" stroke="#35627a" stroke-width="1"/>
<circle cx="999.30" cy="642.20" r="4.2" fill="#447791" stroke="#35627a" stroke-width="1"/>
<circle cx="1007.88" cy="640.50" r="4.2" fill="#447791" stroke="#35627a" stroke-width="1"/>
<circle cx="1016.47" cy="643.90" r="4.2" fill="#447791" stroke="#35627a" stroke-width="1"/>
<circle cx="1025.06" cy="505.20" r="4.2" fill="#447791" stroke="#35627a" stroke-width="1"/>
<circle cx="1033.64" cy="493.80" r="4.2" fill="#447791" stroke="#35627a" stroke-width="1"/>
<circle cx="1042.22" cy="401.20" r="4.2" fill="#447791" stroke="#35627a" stroke-width="1"/>
<circle cx="1050.81" cy="383.80" r="4.2" fill="#447791" stroke="#35627a" stroke-width="1"/>
<circle cx="1059.39" cy="328.60" r="4.2" fill="#447791" stroke="#35627a" stroke-width="1"/>
<circle cx="1067.98" cy="365.80" r="4.2" fill="#447791" stroke="#35627a" stroke-width="1"/>
<circle cx="1076.57" cy="395.50" r="4.2" fill="#447791" stroke="#35627a" stroke-width="1"/>
<circle cx="1085.15" cy="358.00" r="4.2" fill="#447791" stroke="#35627a" stroke-width="1"/>
<circle cx="1093.74" cy="327.00" r="4.2" fill="#447791" stroke="#35627a" stroke-width="1"/>
<circle cx="1102.32" cy="315.30" r="4.2" fill="#447791" stroke="#35627a" stroke-width="1"/>
<circle cx="1110.90" cy="417.60" r="4.2" fill="#447791" stroke="#35627a" stroke-width="1"/>
<circle cx="1119.49" cy="383.80" r="4.2" fill="#447791" stroke="#35627a" stroke-width="1"/>
<circle cx="1128.08" cy="496.90" r="4.2" fill="#447791" stroke="#35627a" stroke-width="1"/>
<circle cx="1136.66" cy="341.50" r="4.2" fill="#447791" stroke="#35627a" stroke-width="1"/>
<circle cx="1145.24" cy="468.00" r="4.2" fill="#447791" stroke="#35627a" stroke-width="1"/>
<circle cx="1153.83" cy="495.50" r="4.2" fill="#447791" stroke="#35627a" stroke-width="1"/>
<circle cx="1162.41" cy="417.80" r="4.2" fill="#447791" stroke="#35627a" stroke-width="1"/>
<circle cx="1171.00" cy="492.50" r="4.2" fill="#447791" stroke="#35627a" stroke-width="1"/>
<circle cx="1179.59" cy="491.20" r="4.2" fill="#447791" stroke="#35627a" stroke-width="1"/>
<circle cx="1188.17" cy="414.40" r="4.2" fill="#447791" stroke="#35627a" stroke-width="1"/>
<circle cx="1196.76" cy="383.60" r="4.2" fill="#447791" stroke="#35627a" stroke-width="1"/>
<circle cx="1205.34" cy="388.80" r="4.2" fill="#447791" stroke="#35627a" stroke-width="1"/>
<circle cx="1213.93" cy="406.40" r="4.2" fill="#447791" stroke="#35627a" stroke-width="1"/>
<circle cx="1222.51" cy="417.80" r="4.2" fill="#447791" stroke="#35627a" stroke-width="1"/>
<circle cx="1231.10" cy="409.40" r="4.2" fill="#447791" stroke="#35627a" stroke-width="1"/>
<circle cx="1239.68" cy="430.30" r="4.2" fill="#447791" stroke="#35627a" stroke-width="1"/>
<circle cx="1248.26" cy="447.00" r="4.2" fill="#447791" stroke="#35627a" stroke-width="1"/>
<circle cx="1256.85" cy="461.20" r="4.2" fill="#447791" stroke="#35627a" stroke-width="1"/>
<circle cx="1265.43" cy="440.20" r="4.2" fill="#447791" stroke="#35627a" stroke-width="1"/>
<circle cx="1274.02" cy="477.70" r="4.2" fill="#447791" stroke="#35627a" stroke-width="1"/>
<circle cx="1282.61" cy="474.40" r="4.2" fill="#447791" stroke="#35627a" stroke-width="1"/>
<circle cx="1291.19" cy="506.90" r="4.2" fill="#447791" stroke="#35627a" stroke-width="1"/>
<circle cx="1299.78" cy="547.70" r="4.2" fill="#447791" stroke="#35627a" stroke-width="1"/>
<circle cx="1308.36" cy="442.00" r="4.2" fill="#447791" stroke="#35627a" stroke-width="1"/>
</svg>

<div id="footer">
<span style="left:6.5px">Core Server: </span><span class="g" style="left:80.5px">online</span><span style="left:116.5px">(CitiCV CORE)</span>
<span style="left:210.5px">Database: </span><span class="g" style="left:274px">connected</span>
<span style="left:344px">Reporting Server: </span><span class="g" style="left:447.5px">connected</span>
<span style="left:1273px">NETx BMS Platform R2 Build 2067</span>
<span style="left:1479.5px;letter-spacing:0.2px">29/08/2023 18:48:20</span>
</div>
</body></html>
